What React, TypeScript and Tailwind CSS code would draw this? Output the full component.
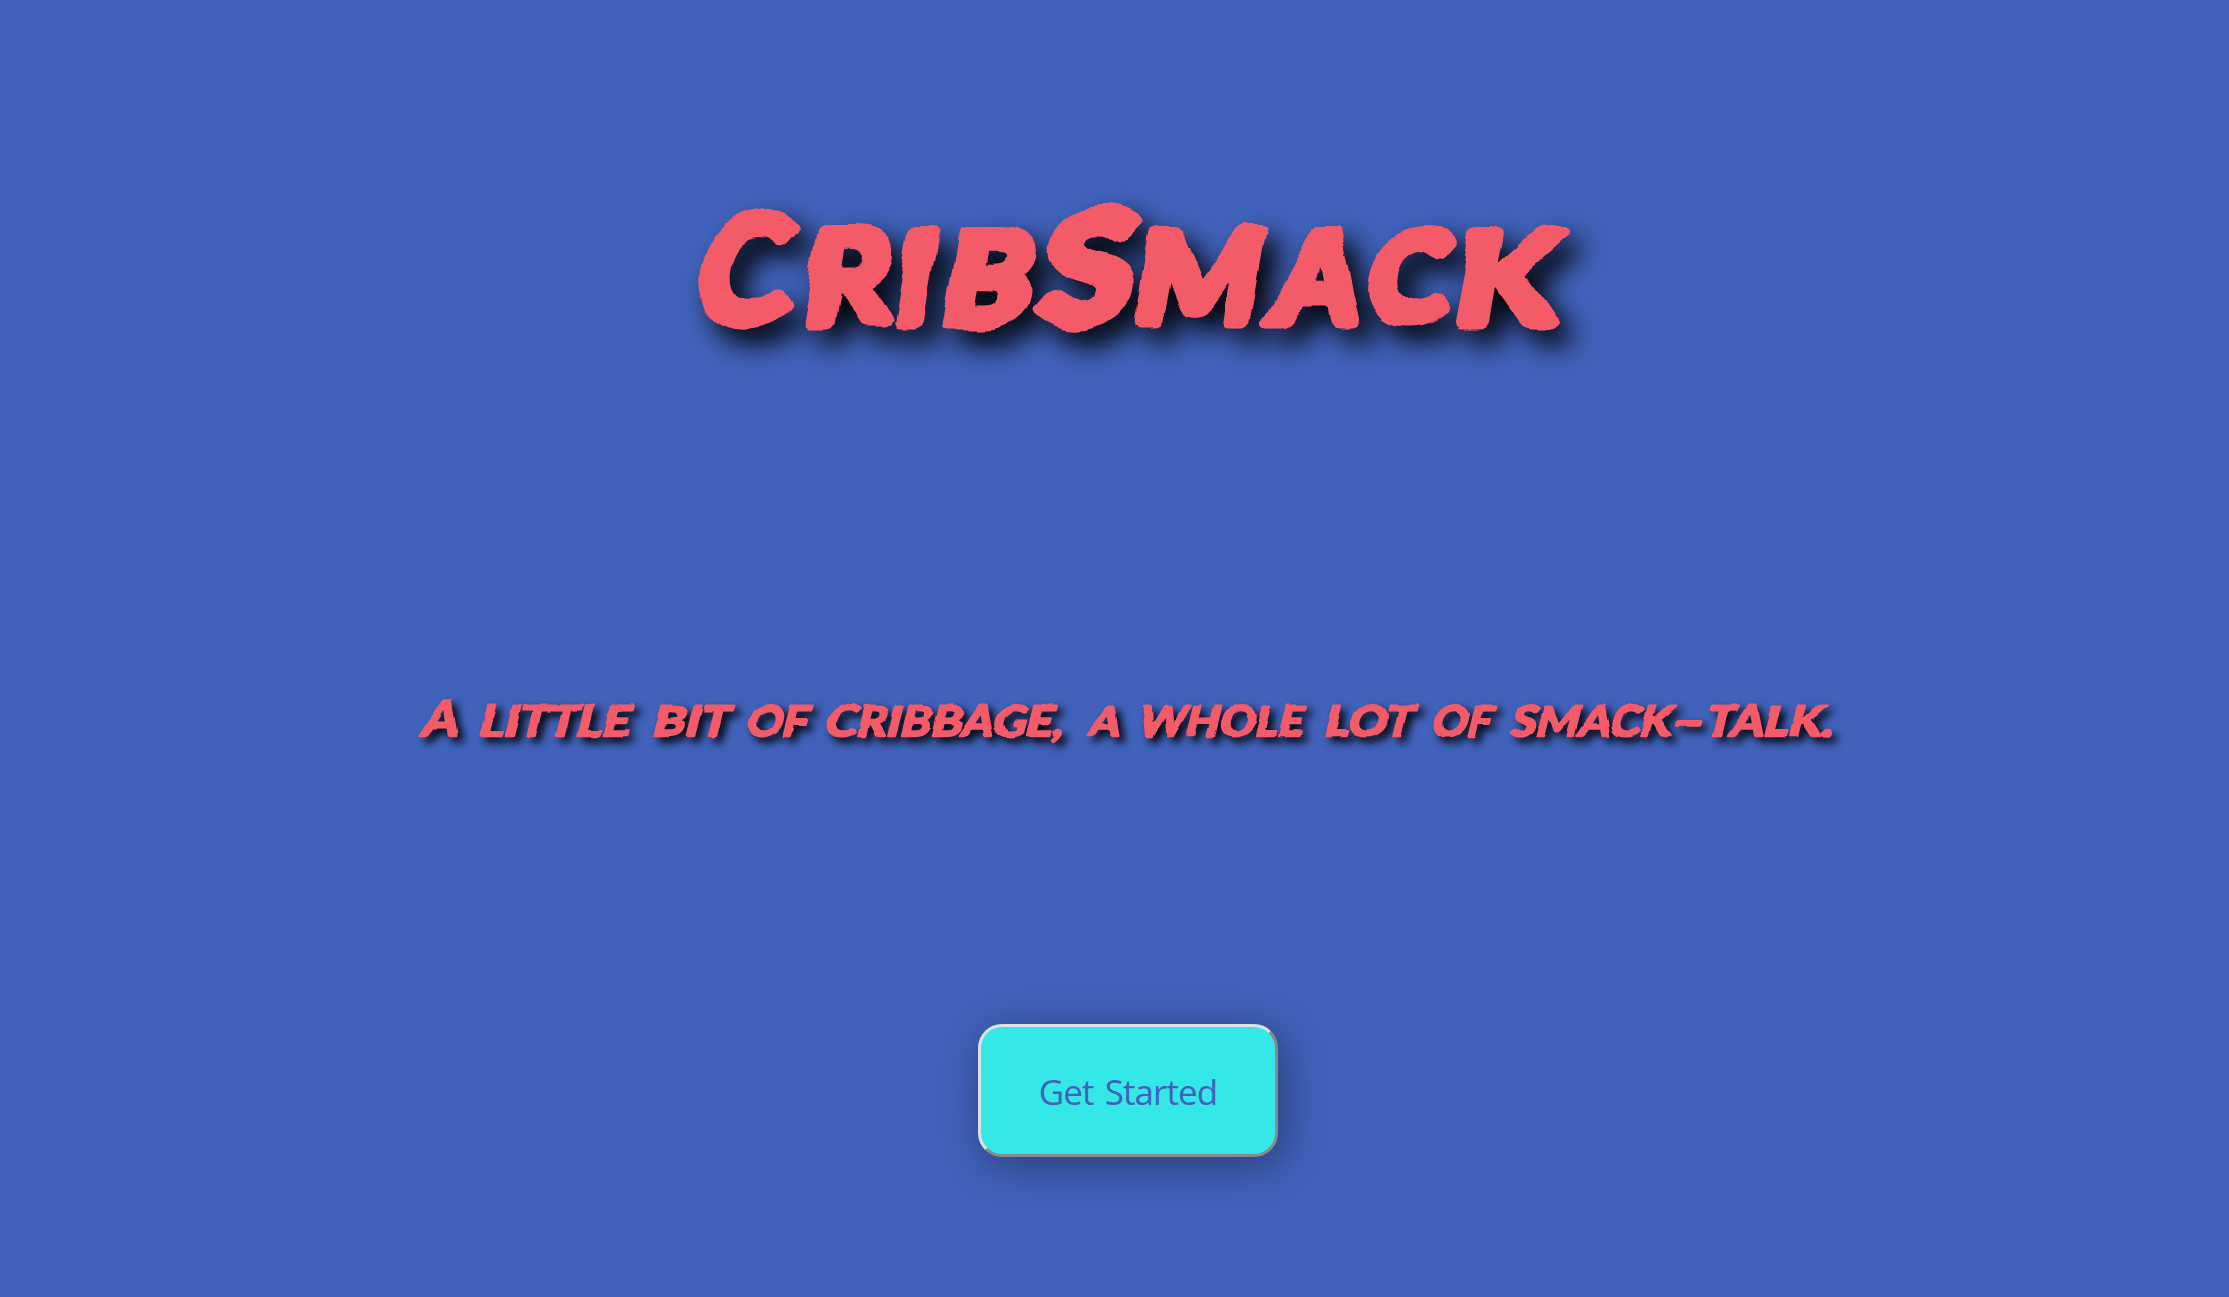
type Piece = { text: string; x: number; width: number; size: number };

const title: Piece[] = [
  { text: "C", x: 692, width: 90, size: 147 },
  { text: "r", x: 798, width: 86, size: 124 },
  { text: "i", x: 890, width: 36, size: 124 },
  { text: "b", x: 938, width: 88, size: 124 },
  { text: "S", x: 1034, width: 92, size: 150 },
  { text: "m", x: 1130, width: 126, size: 124 },
  { text: "a", x: 1269, width: 84, size: 124 },
  { text: "c", x: 1363, width: 78, size: 124 },
  { text: "k", x: 1450, width: 100, size: 124 },
];

const tagline: Piece[] = [
  { text: "A", x: 420, width: 36, size: 49 },
  { text: "little", x: 477, width: 151, size: 42 },
  { text: "bit", x: 651, width: 76, size: 42 },
  { text: "of", x: 745, width: 60, size: 42 },
  { text: "cribbage,", x: 824, width: 238, size: 42 },
  { text: "a", x: 1087, width: 31, size: 42 },
  { text: "whole", x: 1137, width: 164, size: 42 },
  { text: "lot", x: 1323, width: 88, size: 42 },
  { text: "of", x: 1430, width: 60, size: 42 },
  { text: "smack", x: 1509, width: 160, size: 42 },
  { text: "-", x: 1670, width: 31, size: 42 },
  { text: "talk.", x: 1703, width: 128, size: 42 },
];

function Pieces({ items }: { items: Piece[] }) {
  return (
    <>
      {items.map((p, i) => (
        <tspan key={i} x={p.x} y={0} fontSize={p.size} textLength={p.width} lengthAdjust="spacingAndGlyphs">
          {p.text}
        </tspan>
      ))}
    </>
  );
}

function Roughen({ id, frequency, scale }: { id: string; frequency: number; scale: number }) {
  return (
    <filter id={id} x="-5%" y="-20%" width="110%" height="140%" colorInterpolationFilters="sRGB">
      <feTurbulence type="fractalNoise" baseFrequency={frequency} numOctaves={2} seed={4} result="noise" />
      <feDisplacementMap in="SourceGraphic" in2="noise" scale={scale} xChannelSelector="R" yChannelSelector="G" />
    </filter>
  );
}

export default function App() {
  return (
    <main className="flex h-[1297px] w-full flex-col items-center overflow-hidden bg-[#4062bb] pl-[27px]">
      <h1 className="mt-[180px] h-[180px] w-[900px]">
        <svg
          viewBox="678 180 900 180"
          className="h-full w-full overflow-visible font-['Lato',sans-serif] font-bold drop-shadow-[13px_15px_14px_#000]"
        >
          <Roughen id="rough-title" frequency={0.018} scale={14} />
          <g filter="url(#rough-title)">
            <text
              transform="translate(0 322) skewX(-10)"
              className="fill-[#f45b69] stroke-[#f45b69] stroke-[13px] uppercase"
              strokeLinejoin="round"
            >
              <Pieces items={title} />
            </text>
          </g>
        </svg>
      </h1>
      <p className="mt-[320px] h-[80px] w-[1440px]">
        <svg
          viewBox="408 680 1440 80"
          className="h-full w-full overflow-visible font-['Lato',sans-serif] font-bold drop-shadow-[5px_5px_4px_#000]"
        >
          <Roughen id="rough-tagline" frequency={0.05} scale={4} />
          <g filter="url(#rough-tagline)">
            <text
              transform="translate(0 736) skewX(-14)"
              className="fill-[#f45b69] stroke-[#f45b69] stroke-[2.5px] uppercase"
              strokeLinejoin="round"
            >
              <Pieces items={tagline} />
            </text>
          </g>
        </svg>
      </p>
      <button className="mt-[264px] h-[133px] w-[300px] rounded-[24px] border-[3px] border-t-[#e0e0e0] border-r-[#8a8a8a] border-b-[#8a8a8a] border-l-[#e0e0e0] bg-[#35e8e8] pt-[3px] font-['Open_Sans',sans-serif] text-[35px] tracking-[-0.9px] text-[#4062bb] shadow-[6px_8px_44px_0_rgba(0,0,0,0.38)] [word-spacing:3px]">
        Get Started
      </button>
    </main>
  );
}
